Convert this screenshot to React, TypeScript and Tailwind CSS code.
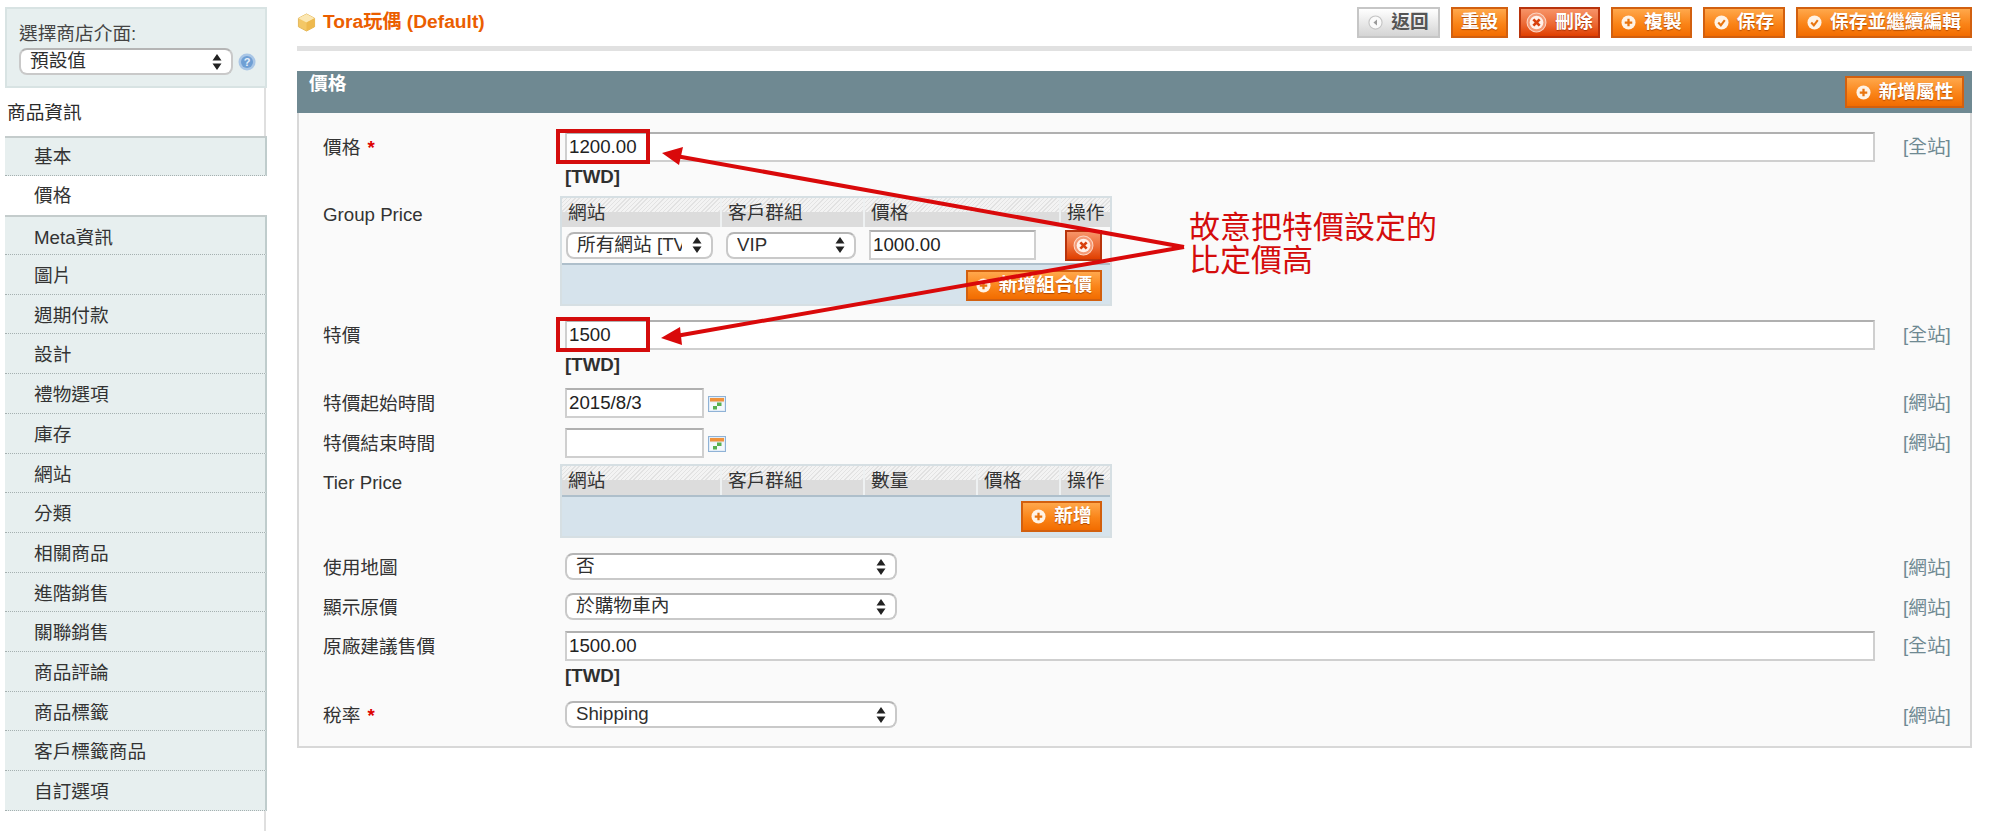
import type { ReactNode } from "react";

const navItems = [
  "基本",
  "價格",
  "Meta資訊",
  "圖片",
  "週期付款",
  "設計",
  "禮物選項",
  "庫存",
  "網站",
  "分類",
  "相關商品",
  "進階銷售",
  "關聯銷售",
  "商品評論",
  "商品標籤",
  "客戶標籤商品",
  "自訂選項",
];

const hatch =
  "bg-[linear-gradient(to_bottom,transparent_50%,#dcdcdc_50%),repeating-linear-gradient(135deg,#e2e2e2_0_1px,#f3f3f3_1px_3px)]";

function Arrows() {
  return (
    <svg width="12" height="18" viewBox="0 0 12 18" className="shrink-0">
      <path d="M6 1 L10.5 7.5 H1.5 Z M6 17 L10.5 10.5 H1.5 Z" fill="#222" />
    </svg>
  );
}

function Select({ value, className }: { value: string; className: string }) {
  return (
    <div
      className={`flex h-[27px] items-center justify-between rounded-lg border-2 border-[#c9c9c9] border-t-[#b5b5b5] bg-white pr-[8px] pl-[9px] text-[#2f2f2f] ${className}`}
    >
      <span className="max-w-[105px] overflow-hidden whitespace-nowrap">{value}</span>
      <Arrows />
    </div>
  );
}

function TextInput({ value, className }: { value?: string; className: string }) {
  return (
    <input
      readOnly
      value={value ?? ""}
      className={`h-[30px] border-2 border-[#cfcfcf] border-t-[#b0b0b0] bg-white px-[2px] text-[#222] outline-none ${className}`}
    />
  );
}

function PlusIcon() {
  return (
    <svg width="15" height="15" viewBox="0 0 16 16" className="shrink-0">
      <circle cx="8" cy="8" r="7.5" fill="#fff3e6" />
      <path d="M8 4 V12 M4 8 H12" stroke="#e8740e" strokeWidth="2.4" />
    </svg>
  );
}

function CheckIcon() {
  return (
    <svg width="15" height="15" viewBox="0 0 16 16" className="shrink-0">
      <circle cx="8" cy="8" r="7.5" fill="#fff3e6" />
      <path d="M4.5 8 L7.3 11 L11.5 5.5" stroke="#e8740e" strokeWidth="2.2" fill="none" />
    </svg>
  );
}

function CrossIcon() {
  return (
    <svg width="21" height="21" viewBox="0 0 20 20" className="shrink-0">
      <circle cx="10" cy="10" r="9" fill="#f49a76" stroke="#fbd3c0" strokeWidth="1" />
      <circle cx="10" cy="10" r="6.5" fill="#fff1ea" />
      <path d="M7 7 L13 13 M13 7 L7 13" stroke="#d8400c" strokeWidth="2.6" />
    </svg>
  );
}

function BackIcon() {
  return (
    <svg width="15" height="15" viewBox="0 0 16 16" className="shrink-0">
      <circle cx="8" cy="8" r="7" fill="#fafafa" stroke="#c4c4c4" strokeWidth="1.2" />
      <path d="M9.6 4.8 L5.8 8 L9.6 11.2 Z" fill="#9a9a9a" />
    </svg>
  );
}

function Button({
  children,
  icon,
  variant = "orange",
  className,
}: {
  children?: ReactNode;
  icon?: ReactNode;
  variant?: "orange" | "red" | "gray";
  className: string;
}) {
  const look =
    variant === "gray"
      ? "border-[#c6c6c6] bg-[linear-gradient(#ffffff,#d4d4d4)] text-[#555]"
      : variant === "red"
        ? "border-[#b8340c] bg-[linear-gradient(#f79468,#ec6a35_55%,#e03f00)] text-white [text-shadow:0_1px_1px_#a93200]"
        : "border-[#d2600f] bg-[linear-gradient(#ffa84c,#fa8418_55%,#f26c00)] text-white [text-shadow:0_1px_1px_#b34a00]";
  return (
    <div
      className={`flex h-[31px] items-center justify-center gap-[8px] border-2 font-bold whitespace-nowrap ${look} ${className}`}
    >
      {icon}
      {children}
    </div>
  );
}

function Row({
  label,
  required,
  scope,
  className,
  labelClass,
  children,
}: {
  label: string;
  required?: boolean;
  scope?: string;
  className?: string;
  labelClass?: string;
  children: ReactNode;
}) {
  return (
    <div className={`flex ${className ?? ""}`}>
      <div className={`h-[30px] w-[242px] shrink-0 leading-[32px] text-[#333] ${labelClass ?? ""}`}>
        {label}
        {required && <span className="ml-[7px] font-bold text-[#dd0000]">*</span>}
      </div>
      <div className="w-[1310px] shrink-0">{children}</div>
      {scope && <div className="ml-[28px] h-[30px] leading-[29px] text-[#6f8992]">{scope}</div>}
    </div>
  );
}

function Currency() {
  return <div className="h-[30px] leading-[30px] font-bold text-[#2f2f2f]">[TWD]</div>;
}

function Calendar() {
  return (
    <svg width="18" height="16" viewBox="0 0 18 16" className="mt-[8px] shrink-0">
      <rect x="0.5" y="0.5" width="17" height="15" fill="#e3edf7" stroke="#8fb2d6" />
      <rect x="2" y="2" width="14" height="3.5" fill="#f0923c" />
      <rect x="2" y="6.5" width="14" height="7.5" fill="#f4f8fb" />
      <rect x="9" y="6.5" width="4.5" height="3.5" fill="#58b04e" />
      <rect x="5" y="10" width="4" height="3.5" fill="#58b04e" />
    </svg>
  );
}

function HeadCell({ children }: { children: ReactNode }) {
  return (
    <div className={`h-[29px] border-r-2 border-[#eef1f2] pl-[6px] leading-[29px] text-[#333] last:border-r-0 ${hatch}`}>
      {children}
    </div>
  );
}

export default function App() {
  return (
    <div className="relative flex h-[831px] overflow-hidden bg-white pl-[5px] font-['Liberation_Sans','Noto_Sans_CJK_TC',sans-serif] text-[18.7px] text-[#2f2f2f]">
      <aside className="flex w-[262px] shrink-0 flex-col pt-[7px]">
        <div className="h-[81px] border-2 border-[#d8e3e3] bg-[#e7efef] pt-[11px] pl-[12px]">
          <div className="h-[28px] leading-[28px] text-[#444]">選擇商店介面:</div>
          <div className="flex items-center gap-[5px]">
            <Select value="預設值" className="w-[214px]" />
            <svg width="18" height="18" viewBox="0 0 18 18" className="shrink-0">
              <circle cx="9" cy="9" r="8.5" fill="#a9c6e6" />
              <circle cx="9" cy="9" r="6" fill="#6f9fd4" />
              <text x="9" y="13" textAnchor="middle" fontSize="11" fontWeight="700" fill="#e8f0fa">
                ?
              </text>
            </svg>
          </div>
        </div>
        <div className="mr-[1px] h-[48px] border-r-2 border-[#dfdfdf] pl-[2px] leading-[50px] text-[#2b2b2b]">
          商品資訊
        </div>
        {navItems.map((item) => {
          const active = item === "價格";
          const first = item === "基本";
          return (
            <div
              key={item}
              className={`h-[39.7px] shrink-0 pl-[29px] text-[#333] ${
                active
                  ? "bg-white leading-[39px]"
                  : "border-r-2 border-b border-r-[#bfcccc] border-b-[#a5b0b0] [border-bottom-style:dotted] bg-[#e7efef]"
              } ${first ? "leading-[37px]" : active ? "" : "leading-[41px]"} ${
                first || item === "Meta資訊" ? "border-t-2 border-t-[#c4cccc]" : ""
              }`}
            >
              {item}
            </div>
          );
        })}
        <div className="mr-[1px] flex-1 border-r-2 border-[#dfdfdf]" />
      </aside>

      <main className="ml-[30px] w-[1675px] shrink-0 pt-[7px]">
        <div className="flex h-[31px] items-center justify-between">
          <div className="flex items-center gap-[7px]">
            <svg width="19" height="19" viewBox="0 0 20 20">
              <path d="M10 1 L18.5 5.5 V14.5 L10 19 L1.5 14.5 V5.5 Z" fill="#f3c766" stroke="#e3b65a" />
              <path d="M10 1 L18.5 5.5 L10 10 L1.5 5.5 Z" fill="#fbe7b3" />
              <path d="M10 10 L18.5 5.5 V14.5 L10 19 Z" fill="#eeb94e" />
            </svg>
            <span className="text-[19.2px] font-bold text-[#eb5e00]">Tora玩偶 (Default)</span>
          </div>
          <div className="flex gap-[11px]">
            <Button variant="gray" icon={<BackIcon />} className="w-[83px]">
              返回
            </Button>
            <Button className="w-[57px]">重設</Button>
            <Button variant="red" icon={<CrossIcon />} className="w-[81px] gap-[2px]">
              刪除
            </Button>
            <Button icon={<PlusIcon />} className="w-[81px]">
              複製
            </Button>
            <Button icon={<CheckIcon />} className="w-[82px]">
              保存
            </Button>
            <Button icon={<CheckIcon />} className="w-[176px]">
              保存並繼續編輯
            </Button>
          </div>
        </div>
        <div className="mt-[8px] h-[5px] bg-[#e1e1e1]" />

        <section className="mt-[20px]">
          <div className="flex h-[42px] justify-between bg-[#6f8992] pr-[8px] pl-[12px]">
            <h2 className="leading-[26px] font-bold text-white">價格</h2>
            <Button icon={<PlusIcon />} className="mt-[5px] h-[32px] w-[119px]">
              新增屬性
            </Button>
          </div>
          <div className="border-2 border-t-0 border-[#d8d8d8] bg-[#fafafa] pt-[19px] pb-[18px] pl-[24px]">
            <Row label="價格" required scope="[全站]">
              <TextInput value="1200.00" className="w-full" />
              <Currency />
            </Row>

            <Row label="Group Price" className="mt-[4px]" labelClass="mt-[3px]">
              <div className="-ml-[5px] w-[552px] border-2 border-[#d6dfe3]">
                <div className="grid grid-cols-[160px_143px_196px_49px]">
                  <HeadCell>網站</HeadCell>
                  <HeadCell>客戶群組</HeadCell>
                  <HeadCell>價格</HeadCell>
                  <HeadCell>操作</HeadCell>
                </div>
                <div className="grid h-[36px] grid-cols-[160px_143px_196px_49px] items-center bg-[#fafafa]">
                  <div className="pl-[4px]">
                    <Select value="所有網站 [TV" className="w-[147px]" />
                  </div>
                  <div className="pl-[4px]">
                    <Select value="VIP" className="w-[130px]" />
                  </div>
                  <div className="pl-[4px]">
                    <TextInput value="1000.00" className="w-[167px]" />
                  </div>
                  <div className="pl-[4px]">
                    <Button variant="red" icon={<CrossIcon />} className="w-[37px]" />
                  </div>
                </div>
                <div className="flex h-[41px] justify-end border-t-2 border-[#aebfcb] bg-[#d6e3ec] pt-[5px] pr-[8px]">
                  <Button icon={<PlusIcon />} className="w-[136px]">
                    新增組合價
                  </Button>
                </div>
              </div>
            </Row>

            <Row label="特價" scope="[全站]" className="mt-[14px]">
              <TextInput value="1500" className="w-full" />
              <Currency />
            </Row>

            <Row label="特價起始時間" scope="[網站]" className="mt-[8px]">
              <div className="flex gap-[4px]">
                <TextInput value="2015/8/3" className="w-[139px]" />
                <Calendar />
              </div>
            </Row>

            <Row label="特價結束時間" scope="[網站]" className="mt-[10px]">
              <div className="flex gap-[4px]">
                <TextInput className="w-[139px]" />
                <Calendar />
              </div>
            </Row>

            <Row label="Tier Price" className="mt-[6px]" labelClass="mt-[3px]">
              <div className="-ml-[5px] w-[552px] border-2 border-[#d6dfe3]">
                <div className="grid grid-cols-[160px_143px_113px_83px_49px]">
                  <HeadCell>網站</HeadCell>
                  <HeadCell>客戶群組</HeadCell>
                  <HeadCell>數量</HeadCell>
                  <HeadCell>價格</HeadCell>
                  <HeadCell>操作</HeadCell>
                </div>
                <div className="flex h-[41px] justify-end border-t-2 border-[#aebfcb] bg-[#d6e3ec] pt-[4px] pr-[8px]">
                  <Button icon={<PlusIcon />} className="w-[81px]">
                    新增
                  </Button>
                </div>
              </div>
            </Row>

            <Row label="使用地圖" scope="[網站]" className="mt-[15px] h-[27px]" labelClass="-mt-[1px]">
              <Select value="否" className="w-[332px]" />
            </Row>

            <Row label="顯示原價" scope="[網站]" className="mt-[13px] h-[27px]" labelClass="-mt-[1px]">
              <Select value="於購物車內" className="w-[332px]" />
            </Row>

            <Row label="原廠建議售價" scope="[全站]" className="mt-[11px]">
              <TextInput value="1500.00" className="w-full" />
              <Currency />
            </Row>

            <Row label="稅率" required scope="[網站]" className="mt-[10px] h-[27px]" labelClass="-mt-[1px]">
              <Select value="Shipping" className="w-[332px]" />
            </Row>
          </div>
        </section>
      </main>

      {/* red annotation drawn over the form */}
      <div className="absolute top-[129px] left-[556px] h-[35px] w-[94px] border-4 border-[#d40c0c]" />
      <div className="absolute top-[317px] left-[556px] h-[35px] w-[94px] border-4 border-[#d40c0c]" />
      <svg width="1999" height="831" className="pointer-events-none absolute top-0 left-0">
        <path d="M1184 247 L676 156 M1184 247 L676 336" stroke="#d9090a" strokeWidth="4" fill="none" />
        <path d="M662 153 L683 147 L679 165 Z M661 338 L680 327 L682 345 Z" fill="#d9090a" />
      </svg>
      <div className="absolute top-[211px] left-[1189px] text-[31px] leading-[33px] text-[#d40c0c]">
        故意把特價設定的
        <br />
        比定價高
      </div>
    </div>
  );
}
